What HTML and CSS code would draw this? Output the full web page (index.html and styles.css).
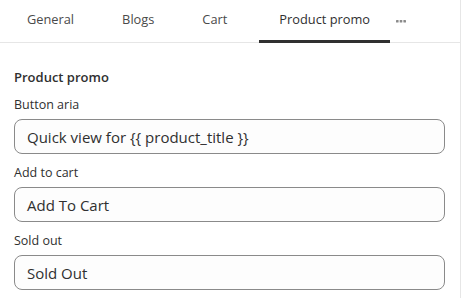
FILE: index.html
```html
<!DOCTYPE html>
<html lang="en">
<head>
  <meta charset="UTF-8">
  <title>Product promo settings</title>
  <link rel="stylesheet" href="styles.css">
</head>
<body>
  <div class="panel">
    <!-- Tabs -->
    <div class="tabs">
      <div class="tab">General</div>
      <div class="tab">Blogs</div>
      <div class="tab">Cart</div>
      <div class="tab active">Product promo</div>
      <div class="tab more">
        <svg width="10" height="3" viewBox="0 0 10 3"><rect x="0" y="0" width="2.6" height="2.6" rx="0.6" fill="#8a8a8a"/><rect x="3.7" y="0" width="2.6" height="2.6" rx="0.6" fill="#8a8a8a"/><rect x="7.4" y="0" width="2.6" height="2.6" rx="0.6" fill="#8a8a8a"/></svg>
      </div>
    </div>

    <!-- Settings -->
    <div class="section">
      <h2 class="section-title">Product promo</h2>
      <div class="field">
        <label class="field-label">Button aria</label>
        <div class="input">Quick view for {{ product_title }}</div>
      </div>
      <div class="field">
        <label class="field-label">Add to cart</label>
        <div class="input">Add To Cart</div>
      </div>
      <div class="field">
        <label class="field-label">Sold out</label>
        <div class="input">Sold Out</div>
      </div>
    </div>
  </div>
</body>
</html>
```

FILE: styles.css
```css
* {
  box-sizing: border-box;
  margin: 0;
  padding: 0;
}

html, body {
  height: 100%;
  background: #fff;
  font-family: 'Open Sans', 'Noto Sans', Arial, sans-serif;
  color: #303030;
  overflow: hidden;
}

.panel {
  width: 461px;
  height: 100%;
  border-right: 1px solid #e6e6e6;
}

/* Tabs */
.tabs {
  display: flex;
  height: 43px;
  padding-left: 7px;
  gap: 8px;
  border-bottom: 1px solid #e6e6e6;
}

.tab {
  display: flex;
  align-items: center;
  padding: 0 20px 3px;
  font-size: 12.8px;
  color: #4a4a4a;
  border-bottom: 3px solid transparent;
  margin-bottom: -1px;
}

.tab.active {
  margin-left: 4px;
  color: #303030;
  border-bottom-color: #303030;
}

.tab.more {
  margin-left: -2px;
  padding: 3px 0 0;
}

/* Section */
.section {
  padding: 25px 15px 0 14px;
}

.section-title {
  font-size: 13px;
  font-weight: 600;
  line-height: 18px;
  color: #303030;
  margin-bottom: 10px;
}

.field {
  margin-bottom: 10px;
}

.field-label {
  display: block;
  font-size: 12.5px;
  line-height: 18px;
  color: #303030;
  margin-bottom: 5px;
}

.input {
  height: 35px;
  display: flex;
  align-items: center;
  padding: 0 12px;
  font-size: 15px;
  color: #303030;
  background: #fdfdfd;
  border: 1px solid #8a8a8a;
  border-radius: 8px;
}
```
